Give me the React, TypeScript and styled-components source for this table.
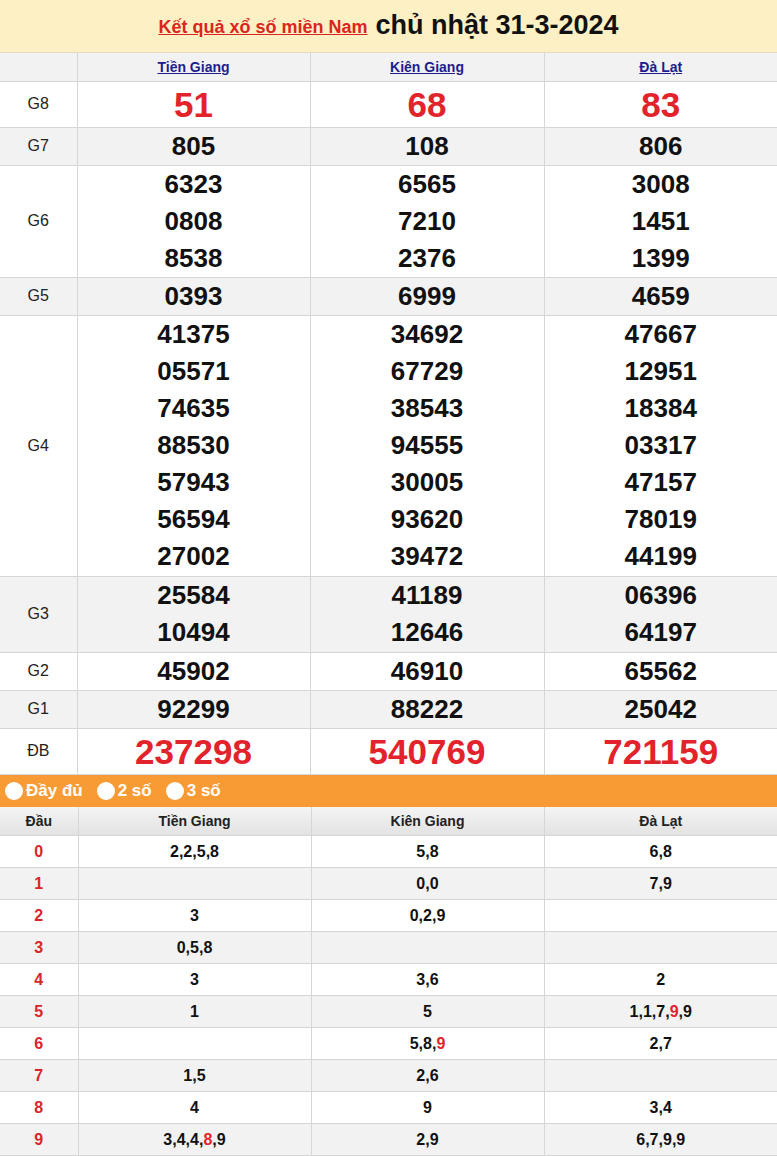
import React from "react";
import styled, { createGlobalStyle } from "styled-components";

const Global = createGlobalStyle`
  html, body { margin: 0; padding: 0; background: #fff; }
  body { font-family: "Liberation Sans", Arial, sans-serif; color: #111; }
`;

const Page = styled.div`
  width: 777px;
`;

const TitleBar = styled.div`
  height: 53px;
  background: #fdf0c4;
  display: flex;
  align-items: center;
  justify-content: center;
  gap: 8px;
  border-bottom: 1px solid #e4dcc0;
  box-sizing: border-box;
  padding-bottom: 2px;
`;

const TitleLink = styled.a`
  color: #d9261f;
  font-size: 18px;
  font-weight: bold;
  text-decoration: underline;
  margin-top: 4px;
`;

const TitleDate = styled.h1`
  margin: 0;
  font-size: 27px;
  font-weight: bold;
  color: #111;
`;

const Table = styled.table`
  width: 777px;
  border-collapse: collapse;
  table-layout: fixed;
`;

const Col = styled.col<{ $w: number }>`
  width: ${(p) => p.$w}px;
`;

const HeadRow = styled.tr`
  background: #f2f2f2;
  height: 28px;
`;

const HeadCell = styled.th`
  border: 1px solid #d6d6d6;
  border-top: none;
  padding: 0;
  font-size: 14px;
  font-weight: bold;
  text-align: center;
  &:first-child { border-left: none; }
  &:last-child { border-right: none; }
`;

const ProvLink = styled.a`
  color: #1d1d8f;
  text-decoration: underline;
`;

const Row = styled.tr<{ $alt?: boolean; $h: number }>`
  background: ${(p) => (p.$alt ? "#f2f2f2" : "#fff")};
  height: ${(p) => p.$h}px;
`;

const Label = styled.td`
  border: 1px solid #d6d6d6;
  border-left: none;
  padding: 0;
  text-align: center;
  font-size: 16px;
  color: #222;
`;

const Cell = styled.td`
  border: 1px solid #d6d6d6;
  padding: 0;
  text-align: center;
  &:last-child { border-right: none; }
`;

const Num = styled.div<{ $big?: boolean }>`
  font-weight: bold;
  font-size: ${(p) => (p.$big ? "35px" : "26px")};
  line-height: ${(p) => (p.$big ? "45px" : "37px")};
  color: ${(p) => (p.$big ? "#e3232b" : "#111")};
`;

const OptionBar = styled.div`
  height: 32px;
  background: #f99b35;
  display: flex;
  align-items: center;
  gap: 14px;
  padding-left: 5px;
`;

const Option = styled.label`
  display: flex;
  align-items: center;
  gap: 3px;
  color: #fff;
  font-size: 17px;
  font-weight: bold;
`;

const Dot = styled.span`
  width: 18px;
  height: 18px;
  border-radius: 50%;
  background: #fff;
  display: inline-block;
`;

const LotoHeadRow = styled.tr`
  height: 29px;
  background: linear-gradient(#f4f4f4, #e2e2e2);
`;

const LotoHead = styled.th`
  border: 1px solid #d6d6d6;
  border-top: none;
  padding: 0;
  font-size: 14px;
  font-weight: bold;
  color: #222;
  text-align: center;
  &:first-child { border-left: none; }
  &:last-child { border-right: none; }
`;

const LotoRow = styled.tr<{ $alt?: boolean }>`
  height: 32px;
  background: ${(p) => (p.$alt ? "#f2f2f2" : "#fff")};
`;

const LotoKey = styled.td`
  border: 1px solid #d6d6d6;
  border-left: none;
  padding: 0;
  text-align: center;
  font-size: 16px;
  font-weight: bold;
  color: #d8262b;
`;

const LotoCell = styled.td`
  border: 1px solid #d6d6d6;
  padding: 0;
  text-align: center;
  font-size: 16px;
  font-weight: bold;
  color: #111;
  &:last-child { border-right: none; }
`;

const Hot = styled.span`
  color: #e3232b;
`;

const provinces = ["Tiền Giang", "Kiên Giang", "Đà Lạt"];

type Prize = { label: string; big?: boolean; alt?: boolean; h: number; values: string[][] };

const prizes: Prize[] = [
  { label: "G8", big: true, h: 46, values: [["51"], ["68"], ["83"]] },
  { label: "G7", alt: true, h: 38, values: [["805"], ["108"], ["806"]] },
  {
    label: "G6",
    h: 112,
    values: [
      ["6323", "0808", "8538"],
      ["6565", "7210", "2376"],
      ["3008", "1451", "1399"],
    ],
  },
  { label: "G5", alt: true, h: 38, values: [["0393"], ["6999"], ["4659"]] },
  {
    label: "G4",
    h: 261,
    values: [
      ["41375", "05571", "74635", "88530", "57943", "56594", "27002"],
      ["34692", "67729", "38543", "94555", "30005", "93620", "39472"],
      ["47667", "12951", "18384", "03317", "47157", "78019", "44199"],
    ],
  },
  {
    label: "G3",
    alt: true,
    h: 76,
    values: [
      ["25584", "10494"],
      ["41189", "12646"],
      ["06396", "64197"],
    ],
  },
  { label: "G2", h: 38, values: [["45902"], ["46910"], ["65562"]] },
  { label: "G1", alt: true, h: 38, values: [["92299"], ["88222"], ["25042"]] },
  { label: "ĐB", big: true, h: 46, values: [["237298"], ["540769"], ["721159"]] },
];

// loto values; entries prefixed with "*" are highlighted (from special prize)
const loto: string[][] = [
  ["2,2,5,8", "5,8", "6,8"],
  ["", "0,0", "7,9"],
  ["3", "0,2,9", ""],
  ["0,5,8", "", ""],
  ["3", "3,6", "2"],
  ["1", "5", "1,1,7,*9,9"],
  ["", "5,8,*9", "2,7"],
  ["1,5", "2,6", ""],
  ["4", "9", "3,4"],
  ["3,4,4,*8,9", "2,9", "6,7,9,9"],
];

const renderLoto = (s: string) => {
  if (!s) return null;
  const parts = s.split(",");
  return parts.map((p, i) => (
    <React.Fragment key={i}>
      {i > 0 ? "," : ""}
      {p.startsWith("*") ? <Hot>{p.slice(1)}</Hot> : p}
    </React.Fragment>
  ));
};

export default function App() {
  return (
    <Page>
      <Global />
      <TitleBar>
        <TitleLink href="#">Kết quả xổ số miền Nam</TitleLink>
        <TitleDate>chủ nhật 31-3-2024</TitleDate>
      </TitleBar>
      <Table>
        <colgroup>
          <Col $w={77} />
          <Col $w={233} />
          <Col $w={234} />
          <Col $w={233} />
        </colgroup>
        <thead>
          <HeadRow>
            <HeadCell />
            {provinces.map((p) => (
              <HeadCell key={p}>
                <ProvLink href="#">{p}</ProvLink>
              </HeadCell>
            ))}
          </HeadRow>
        </thead>
        <tbody>
          {prizes.map((pr) => (
            <Row key={pr.label} $alt={pr.alt} $h={pr.h}>
              <Label>{pr.label}</Label>
              {pr.values.map((vals, i) => (
                <Cell key={i}>
                  {vals.map((v, j) => (
                    <Num key={j} $big={pr.big}>
                      {v}
                    </Num>
                  ))}
                </Cell>
              ))}
            </Row>
          ))}
        </tbody>
      </Table>
      <OptionBar>
        <Option>
          <Dot />
          Đầy đủ
        </Option>
        <Option>
          <Dot />2 số
        </Option>
        <Option>
          <Dot />3 số
        </Option>
      </OptionBar>
      <Table>
        <colgroup>
          <Col $w={78} />
          <Col $w={233} />
          <Col $w={233} />
          <Col $w={233} />
        </colgroup>
        <thead>
          <LotoHeadRow>
            <LotoHead>Đầu</LotoHead>
            {provinces.map((p) => (
              <LotoHead key={p}>{p}</LotoHead>
            ))}
          </LotoHeadRow>
        </thead>
        <tbody>
          {loto.map((row, i) => (
            <LotoRow key={i} $alt={i % 2 === 1}>
              <LotoKey>{i}</LotoKey>
              {row.map((c, j) => (
                <LotoCell key={j}>{renderLoto(c)}</LotoCell>
              ))}
            </LotoRow>
          ))}
        </tbody>
      </Table>
    </Page>
  );
}
